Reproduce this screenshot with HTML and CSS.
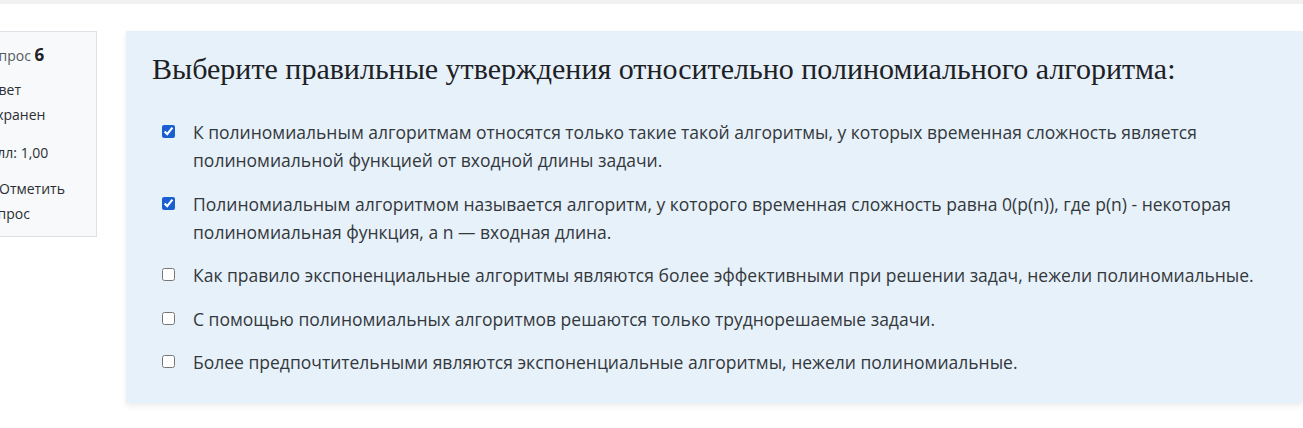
FILE: index.html
```html
<!DOCTYPE html>
<html lang="ru">
<head>
<meta charset="utf-8">
<link rel="stylesheet" href="styles.css">
</head>
<body>
<div class="topband"></div>
<div class="que">
  <div class="info">
    <div class="qno">Вопрос <b>6</b></div>
    <div class="state">Ответ сохранен</div>
    <div class="grade">Балл: 1,00</div>
    <div class="flag"><svg class="flagicon" width="16" height="16" viewBox="0 0 16 16"><path d="M3 1v14M3 2h9l-2 3 2 3H3" fill="none" stroke="#555" stroke-width="1.5"/></svg>Отметить вопрос</div>
  </div>
  <div class="content">
    <div class="formulation">
      <div class="qtext">Выберите правильные утверждения относительно полиномиального алгоритма:</div>
      <div class="answers">
        <label class="ans"><input type="checkbox" checked><span>К полиномиальным алгоритмам относятся только такие такой алгоритмы, у которых временная сложность является полиномиальной функцией от входной длины задачи.</span></label>
        <label class="ans"><input type="checkbox" checked><span>Полиномиальным алгоритмом называется алгоритм, у которого временная сложность равна 0(p(n)), где p(n) - некоторая полиномиальная функция, а n — входная длина.</span></label>
        <label class="ans"><input type="checkbox"><span>Как правило экспоненциальные алгоритмы являются более эффективными при решении задач, нежели полиномиальные.</span></label>
        <label class="ans"><input type="checkbox"><span>С помощью полиномиальных алгоритмов решаются только труднорешаемые задачи.</span></label>
        <label class="ans"><input type="checkbox"><span>Более предпочтительными являются экспоненциальные алгоритмы, нежели полиномиальные.</span></label>
      </div>
    </div>
  </div>
</div>
</body>
</html>
```
FILE: styles.css
```css
html, body {
  margin: 0;
  padding: 0;
  background: #fff;
  overflow: hidden;
}
body {
  width: 1303px;
  height: 428px;
  font-family: "Open Sans", "Noto Sans", sans-serif;
  color: #1d2125;
}
.topband {
  height: 4px;
  background: #f1f1f1;
}
.que {
  display: flex;
  align-items: flex-start;
  gap: 29px;
  margin-top: 27px;
  margin-left: -30px;
}
.info {
  flex: 0 0 auto;
  width: 127px;
  box-sizing: border-box;
  padding: 10px 8px 10px 10px;
  background: #f8f9fa;
  border: 1px solid #dee2e6;
  font-size: 14px;
  line-height: 25px;
  color: #2b2f33;
}
.qno {
  margin-bottom: 9px;
  color: #555b61;
}
.qno b {
  font-size: 17px;
  font-weight: 700;
  color: #1d2125;
}
.state {
  margin-bottom: 13px;
}
.grade {
  margin-bottom: 11px;
}
.flagicon {
  vertical-align: -3px;
  margin-right: 2px;
}
.content {
  flex: 1 1 auto;
  min-width: 0;
}
.formulation {
  background: #e7f1fa;
  padding: 18px 0 27px 26px;
  box-shadow: 0 3px 6px rgba(0, 0, 0, 0.08);
}
.qtext {
  font-family: "Liberation Serif", "DejaVu Serif", serif;
  font-size: 30px;
  line-height: 40px;
  color: #1d2125;
  margin-bottom: 29px;
}
.answers {
  display: flex;
  flex-direction: column;
  gap: 15.5px;
  padding-left: 10px;
}
.ans {
  display: flex;
  align-items: flex-start;
  gap: 18px;
  font-size: 17.5px;
  line-height: 28px;
  color: #33383c;
  padding-right: 20px;
}
.ans input {
  flex: 0 0 auto;
  width: 13px;
  height: 13px;
  margin: 7px 0 0 0;
  accent-color: #1a5fd0;
}
```
